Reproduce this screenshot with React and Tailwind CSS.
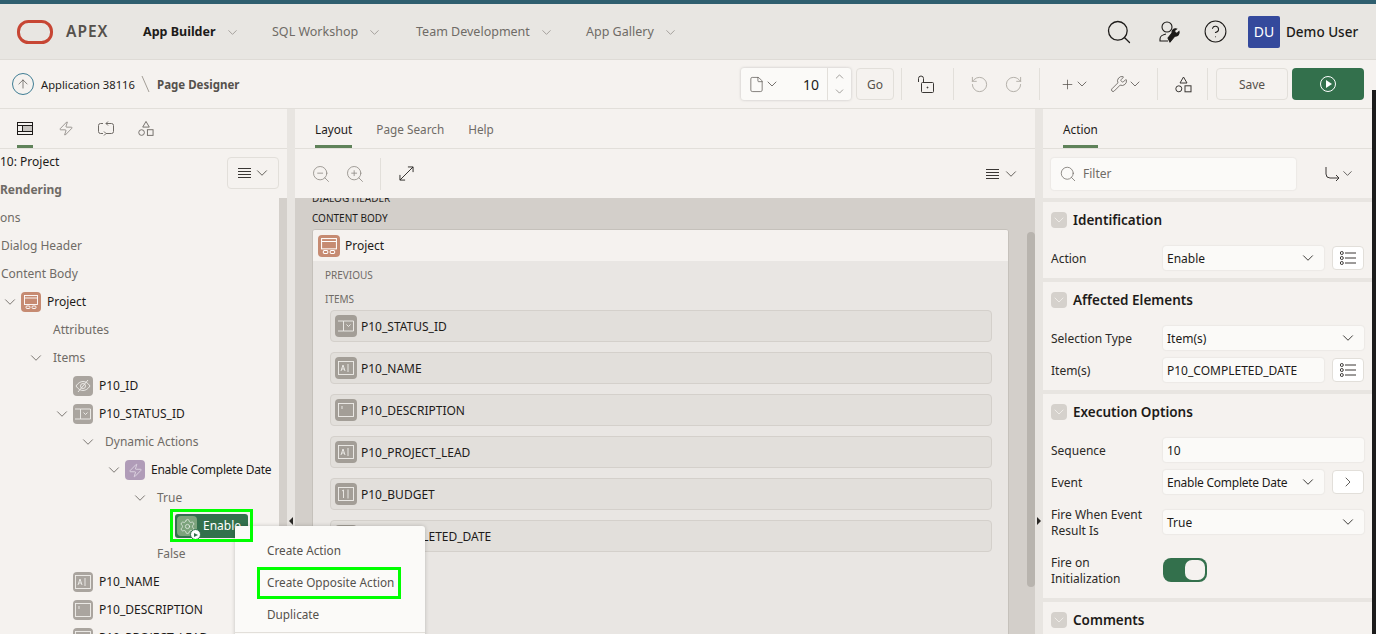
import React from 'react';
import {
    Search, ChevronDown, ChevronUp, ChevronRight, CircleHelp, RotateCcw, RotateCw, Plus, Wrench,
    File, ZoomIn, ZoomOut, Zap, Settings, ArrowUp,
} from 'lucide-react';

const font = { fontFamily: '"Noto Sans", "Open Sans", sans-serif' };

// keeps a 13px layout box whatever the drawn size is
const Chev = ({ className = 'text-[#55514c]', size = 18 }) => (
    <ChevronDown
        size={size}
        strokeWidth={1.2}
        className={`shrink-0 ${className}`}
        style={{ margin: (13 - size) / 2 }}
    />
);

const ShapesIcon = ({ className = '' }) => (
    <svg width="17" height="17" viewBox="0 0 17 17" fill="none" stroke="currentColor" className={className}>
        <path d="M8.5 1 L12 7 L5 7 Z" />
        <circle cx="3.8" cy="12.8" r="3" />
        <rect x="10" y="9.8" width="6" height="6" />
    </svg>
);

const LinesIcon = () => (
    <svg width="13" height="12" viewBox="0 0 13 12" stroke="#3a3734" className="block">
        <path d="M0 1.5h13M0 4.5h13M0 7.5h13M0 10.5h13" />
    </svg>
);

const MenuButton = () => (
    <div className="flex items-center gap-[5px]">
        <LinesIcon />
        <Chev />
    </div>
);

const LayoutIcon = () => (
    <svg width="16" height="13" viewBox="0 0 16 13" fill="none" stroke="#1d1b19" className="block">
        <rect x="5.5" y="3.5" width="10" height="6" fill="#c8c5c1" stroke="none" />
        <rect x="0.5" y="0.5" width="15" height="12" />
        <path d="M0.5 3.5h15M0.5 9.5h15M5.5 3.5v6" />
    </svg>
);

const LoopIcon = () => (
    <svg width="16" height="15" viewBox="0 0 16 15" fill="none" stroke="#6f6b66" className="block">
        <path d="M5 2.5H2.5a2 2 0 0 0-2 2v6a2 2 0 0 0 2 2H5M8 12.5h5.5a2 2 0 0 0 2-2v-6a2 2 0 0 0-2-2H8" />
        <path d="M10 0.5L8 2.5l2 2M6 10.5l2 2-2 2" />
    </svg>
);

const RegionIcon = ({ size = 20 }) => (
    <span className="flex shrink-0 items-center justify-center rounded-sm bg-[#c68b72]" style={{ width: size, height: size }}>
        <svg width={size - 6} height={size - 6} viewBox="0 0 14 14" fill="none" stroke="#fff" strokeWidth="0.9">
            <rect x="0.5" y="0.5" width="13" height="9" />
            <path d="M0.5 3h13" />
            <rect x="2" y="11" width="4" height="2.5" rx="1" />
            <rect x="8" y="11" width="4" height="2.5" rx="1" />
        </svg>
    </span>
);

// glyph inside the grey page item squares
const ItemGlyph = ({ kind }) => {
    if (kind === 'hidden') {
        return (
            <svg width="16" height="14" viewBox="0 0 16 14" fill="none" stroke="#f1efec" strokeWidth="0.9">
                <path d="M1 7c2-3 4.500-4.500 7-4.500S13 4 15 7c-2 3-4.500 4.500-7 4.500S3 10 1 7z" />
                <circle cx="8" cy="7" r="2.500" />
                <path d="M3 13L13 1" />
            </svg>
        );
    }
    if (kind === 'select') {
        return (
            <svg width="16" height="12" viewBox="0 0 16 12" fill="none" stroke="#f1efec" strokeWidth="0.9">
                <path d="M0 1h5.500v10H0M5.500 1H15.500v10H5.500" />
                <path d="M8.500 4.500l2 2 2-2" />
            </svg>
        );
    }
    return (
        <svg width="16" height="14" viewBox="0 0 16 14" fill="none" stroke="#f1efec" strokeWidth="0.9">
            <rect x="0.5" y="0.5" width="15" height="13" />
            {kind === 'text' && <path d="M3 10l2-6 2 6M3.800 8h2.400M10 3v8" />}
            {kind === 'area' && <path d="M4 3v3" />}
            {kind === 'number' && <path d="M4 4l1.500-1v8M10 2.500v9" />}
        </svg>
    );
};

const ItemIcon = ({ kind, size = 20, bg = 'bg-[#aaa59f]' }) => (
    <span className={`flex shrink-0 items-center justify-center rounded-sm ${bg}`} style={{ width: size, height: size }}>
        <ItemGlyph kind={kind} />
    </span>
);

const treeRows = [
    { pl: 'pl-0', text: '10: Project', tone: 'text-[#1d1b19]' },
    { pl: 'pl-0', text: 'Rendering', tone: 'text-[#6f6b66] font-bold' },
    { pl: 'pl-0', text: 'ons' },
    { pl: 'pl-[1px]', text: 'Dialog Header' },
    { pl: 'pl-[1px]', text: 'Content Body' },
    { pl: 'pl-[3px]', slot: 'w-[18px]', chevron: true, icon: <RegionIcon />, text: 'Project', tone: 'text-[#1d1b19]' },
    { pl: 'pl-[53px]', text: 'Attributes' },
    { pl: 'pl-[29px]', slot: 'w-[24px]', chevron: true, text: 'Items' },
    { pl: 'pl-[73px]', icon: <ItemIcon kind="hidden" />, text: 'P10_ID', tone: 'text-[#1d1b19]' },
    { pl: 'pl-[55px]', slot: 'w-[18px]', chevron: true, icon: <ItemIcon kind="select" />, text: 'P10_STATUS_ID', tone: 'text-[#1d1b19]' },
    { pl: 'pl-[81px]', slot: 'w-[24px]', chevron: true, text: 'Dynamic Actions' },
    {
        pl: 'pl-[107px]',
        slot: 'w-[18px]',
        chevron: true,
        icon: (
            <span className="flex h-5 w-5 shrink-0 items-center justify-center rounded-sm bg-[#b09cb8]">
                <Zap size={15} strokeWidth={1} className="text-[#f4f0f5]" />
            </span>
        ),
        text: 'Enable Complete Date',
        tone: 'text-[#1d1b19] tracking-[-0.25px]',
    },
    { pl: 'pl-[133px]', slot: 'w-[24px]', chevron: true, text: 'True' },
    { pl: 'pl-[175px]', selected: true },
    { pl: 'pl-[157px]', text: 'False' },
    { pl: 'pl-[73px]', icon: <ItemIcon kind="text" />, text: 'P10_NAME', tone: 'text-[#1d1b19]' },
    { pl: 'pl-[73px]', icon: <ItemIcon kind="area" />, text: 'P10_DESCRIPTION', tone: 'text-[#1d1b19]' },
    { pl: 'pl-[73px]', icon: <ItemIcon kind="text" />, text: 'P10_PROJECT_LEAD', tone: 'text-[#1d1b19]' },
];

const TreeRow = ({ row }) => {
    if (row.selected) {
        return (
            <div className={`flex h-7 items-center ${row.pl}`}>
                <div className="relative flex h-6 w-[73px] items-center gap-[6px] rounded-[3px] bg-[#33704c] pl-[2px] text-white">
                    <span className="flex h-5 w-5 items-center justify-center rounded-sm bg-[#7ca37c]">
                        <Settings size={17} strokeWidth={1} className="text-[#eef3ee]" />
                    </span>
                    <span>Enable</span>
                    <span className="absolute left-[15px] top-[15px] flex h-[11px] w-[11px] items-center justify-center rounded-full border border-[#33704c] bg-white">
                        <span className="ml-px h-0 w-0 border-y-[2.5px] border-l-[4px] border-y-transparent border-l-[#33704c]" />
                    </span>
                </div>
            </div>
        );
    }
    return (
        <div className={`flex h-7 items-center whitespace-nowrap ${row.pl} ${row.tone || 'text-[#6f6b66]'}`}>
            {row.chevron && (
                <span className={`flex shrink-0 ${row.slot}`}>
                    <Chev className="text-[#6f6b66]" />
                </span>
            )}
            {row.icon && <span className="mr-[6px] flex">{row.icon}</span>}
            <span>{row.text}</span>
        </div>
    );
};

const Tab = ({ label, active }) => (
    <div className={`flex h-full items-center border-b-[3px] pt-[5px] ${active ? 'border-[#5f8259] text-[#1d1b19]' : 'border-transparent text-[#6f6b66]'}`}>
        {label}
    </div>
);

const IconTab = ({ children, active, className = '' }) => (
    <div className={`flex h-full w-4 items-center justify-center border-b-[3px] pt-[3px] ${active ? 'border-[#5f8259]' : 'border-transparent'} ${className}`}>
        {children}
    </div>
);

const LeftPanel = () => (
    <div className="relative flex w-[287px] shrink-0 flex-col overflow-hidden">
        <div className="flex h-10 shrink-0 border-b border-[#e2dfda] pl-[17px]">
            <IconTab active><LayoutIcon /></IconTab>
            <IconTab className="ml-[25px]"><Zap size={17} strokeWidth={1} className="text-[#6f6b66]" /></IconTab>
            <IconTab className="ml-[24px]"><LoopIcon /></IconTab>
            <IconTab className="ml-[24px]"><ShapesIcon className="text-[#6f6b66]" /></IconTab>
        </div>
        <div className="flex min-h-0 flex-1">
            <div className="-mt-[1px] min-w-0 flex-1 text-[12px]">
                {treeRows.map((row, i) => (
                    <TreeRow key={i} row={row} />
                ))}
            </div>
            <div className="mt-[49px] w-2 shrink-0 bg-[#d4d0cb]" />
        </div>
        <div className="absolute left-[227px] top-[48px] flex h-8 w-[52px] items-center justify-center rounded-sm border border-[#e2dfda] bg-[#f5f2ef]">
            <MenuButton />
        </div>
    </div>
);

const Splitter = ({ dir, className = '' }) => (
    <div className={`flex w-2 shrink-0 bg-[#e8e5e1] pt-[408px] ${className}`}>
        <span className={`h-0 w-0 border-y-[4px] border-y-transparent ${dir === 'left' ? 'ml-[2px] border-r-[4px] border-r-[#2b2926]' : 'ml-[2px] border-l-[4px] border-l-[#2b2926]'}`} />
    </div>
);

const canvasItems = [
    { kind: 'select', name: 'P10_STATUS_ID' },
    { kind: 'text', name: 'P10_NAME' },
    { kind: 'area', name: 'P10_DESCRIPTION' },
    { kind: 'text', name: 'P10_PROJECT_LEAD' },
    { kind: 'number', name: 'P10_BUDGET' },
    { kind: 'text', name: 'P10_COMPLETED_DATE' },
];

const CenterPanel = () => (
    <div className="flex min-w-0 flex-1 flex-col">
        <div className="flex h-10 shrink-0 gap-6 border-b border-[#e2dfda] pl-5 text-[11.750px]">
            <Tab label="Layout" active />
            <Tab label="Page Search" />
            <Tab label="Help" />
        </div>
        <div className="flex h-[49px] shrink-0 items-center pl-[16px] pr-[18px]">
            <ZoomOut size={20} strokeWidth={1} className="text-[#8f8b85]" />
            <ZoomIn size={20} strokeWidth={1} className="ml-[14px] text-[#8f8b85]" />
            <div className="ml-[15px] h-8 w-px bg-[#e2dfda]" />
            <svg width="15" height="15" viewBox="0 0 16 16" fill="none" stroke="#2b2926" className="ml-[18px]">
                <path d="M1 15L15 1M9.500 1H15v5.500M1 9.500V15h5.500" />
            </svg>
            <div className="ml-auto"><MenuButton /></div>
        </div>
        <div className="flex min-h-0 flex-1 overflow-hidden bg-[#d3cfca]">
            <div className="min-w-0 flex-1 pl-[17px] pr-[18px] text-[10px] uppercase">
                <div className="-mt-[7px] h-[14px] leading-[14px] text-[#2b2926]">Dialog Header</div>
                <div className="mt-[6px] h-[14px] leading-[14px] text-[#1d1b19]">Content Body</div>
                <div className="mt-[4px] h-[460px] overflow-hidden rounded-t-[3px] border border-[#c5c1bb] bg-[#e9e6e3]">
                    <div className="flex h-[31px] items-center gap-[5px] bg-[#f5f2ef] pl-[5px] text-[12px] normal-case text-[#1d1b19]">
                        <RegionIcon size={22} />
                        Project
                    </div>
                    <div className="pl-[12px] pr-[16px] text-[#6f6b66]">
                        <div className="mt-[7px] h-[14px] leading-[14px]">Previous</div>
                        <div className="mt-[10px] h-[14px] leading-[14px]">Items</div>
                        <div className="ml-[5px] mt-[4px] flex flex-col gap-[10px]">
                            {canvasItems.map(item => (
                                <div key={item.name} className="flex h-8 items-center gap-[4px] rounded-sm border border-[#d4d0cb] bg-[#e2dfdb] pl-[4px] text-[12px] normal-case text-[#1d1b19]">
                                    <ItemIcon kind={item.kind} size={22} bg="bg-[#a39e97]" />
                                    <span className="pt-px">{item.name}</span>
                                </div>
                            ))}
                        </div>
                    </div>
                </div>
            </div>
            <div className="mt-[34px] h-[355px] w-2 shrink-0 rounded-full bg-[#b8b4ae]" />
        </div>
    </div>
);

const Field = ({ value, select, narrow, tight }) => (
    <div className={`flex h-6 items-center justify-between rounded-[3px] bg-[#fbfaf8] pl-1 pr-[10px] text-[#1d1b19] shadow-[0_0_2px_rgba(0,0,0,0.12)] ${narrow ? 'w-[161px]' : 'w-[201px]'}`}>
        <span className={`whitespace-nowrap pt-px ${tight ? 'tracking-[-0.25px]' : ''}`}>{value}</span>
        {select && <Chev className="text-[#2b2926]" />}
    </div>
);

const SideButton = ({ children }) => (
    <div className="ml-2 flex h-6 w-8 items-center justify-center rounded-sm border border-[#e2dfda] bg-white">
        {children}
    </div>
);

const ListIcon = () => (
    <svg width="16" height="14" viewBox="0 0 16 14" fill="none" stroke="#3a3734">
        <circle cx="1.800" cy="2" r="1.500" />
        <circle cx="1.800" cy="7" r="1.500" />
        <circle cx="1.800" cy="12" r="1.500" />
        <path d="M5 2h11M5 7h11M5 12h11" />
    </svg>
);

const Section = ({ title, children }) => (
    <div className="border-t-4 border-[#e8e5e1] px-2 pb-2 pt-[10px]">
        <div className="flex h-4 items-center gap-[6px]">
            <span className="flex h-4 w-4 items-center justify-center rounded-sm bg-[#d5d1cc]">
                <Chev className="text-[#f5f2ef]" size={16} />
            </span>
            <span className="pt-px text-[13.500px] font-semibold text-[#1d1b19]">{title}</span>
        </div>
        <div className="mt-[18px] flex flex-col gap-2">{children}</div>
    </div>
);

const Prop = ({ label, tall, children }) => (
    <div className={`flex items-center ${tall ? 'h-10' : 'h-6'}`}>
        <div className="w-28 shrink-0 pt-px leading-4 text-[#2b2926]">{label}</div>
        {children}
    </div>
);

const RightPanel = () => (
    <div className="flex w-[329px] shrink-0 flex-col overflow-hidden text-[12px]">
        <div className="flex h-10 shrink-0 border-b border-[#e2dfda] pl-5 text-[11.750px]">
            <Tab label="Action" active />
        </div>
        <div className="flex h-[49px] shrink-0 items-center pl-2">
            <div className="flex h-8 w-[245px] items-center gap-[6px] rounded-[3px] bg-[#fbfaf8] pl-[8px] text-[#6f6b66] shadow-[0_0_2px_rgba(0,0,0,0.12)]">
                <Search size={18} strokeWidth={1} className="text-[#6f6b66]" />
                Filter
            </div>
            <svg width="16" height="16" viewBox="0 0 16 16" fill="none" stroke="#3a3734" className="ml-[29px]">
                <path d="M1 1v7a4 4 0 0 0 4 4h9M11 9l3 3-3 3" />
            </svg>
            <Chev className="ml-px text-[#3a3734]" size={15} />
        </div>
        <Section title="Identification">
            <Prop label="Action">
                <Field value="Enable" select narrow />
                <SideButton><ListIcon /></SideButton>
            </Prop>
        </Section>
        <Section title="Affected Elements">
            <Prop label="Selection Type"><Field value="Item(s)" select /></Prop>
            <Prop label="Item(s)">
                <Field value="P10_COMPLETED_DATE" narrow />
                <SideButton><ListIcon /></SideButton>
            </Prop>
        </Section>
        <Section title="Execution Options">
            <Prop label="Sequence"><Field value="10" /></Prop>
            <Prop label="Event">
                <Field value="Enable Complete Date" select narrow tight />
                <SideButton><ChevronRight size={16} strokeWidth={1.2} className="text-[#3a3734]" /></SideButton>
            </Prop>
            <Prop label={<>Fire When Event<br />Result Is</>} tall><Field value="True" select /></Prop>
            <Prop label={<>Fire on<br />Initialization</>} tall>
                <div className="flex h-6 w-11 items-center justify-end rounded-[8px] bg-[#33704c] pr-[2px]">
                    <span className="h-5 w-5 rounded-[7px] bg-[#f5f2ef]" />
                </div>
            </Prop>
        </Section>
        <Section title="Comments" />
    </div>
);

const Sep = ({ className = '' }) => <div className={`h-8 w-px shrink-0 bg-[#e2dfda] ${className}`} />;

const navItems = [
    { label: 'App Builder', active: true, width: 'w-[129px]' },
    { label: 'SQL Workshop', width: 'w-[144px]' },
    { label: 'Team Development', width: 'w-[170px]' },
    { label: 'App Gallery', width: 'w-auto' },
];

const TopBar = () => (
    <header className="flex h-[56px] shrink-0 items-center border-b border-[#dedbd6] bg-[#e8e6e2] pl-[17px] pr-[18px] text-[12.500px]">
        <svg width="36" height="24" viewBox="0 0 36 24" fill="none" className="shrink-0">
            <rect x="1.500" y="1.500" width="33" height="21" rx="10" stroke="#c74634" strokeWidth="3" />
        </svg>
        <span className="ml-[13px] w-[77px] pt-px text-[15.500px] font-semibold tracking-[1px] text-[#55514c]">APEX</span>
        {navItems.map(item => (
            <div key={item.label} className={`flex shrink-0 items-center gap-[10px] pt-[2px] ${item.width} ${item.active ? 'font-bold text-[#1d1b19]' : 'text-[#6f6b66]'}`}>
                {item.label}
                <Chev className="text-[#8f8b85]" size={15} />
            </div>
        ))}
        <Search size={28} strokeWidth={1.100} className="ml-auto text-[#1d1b19]" />
        <svg width="24" height="24" viewBox="0 0 24 24" fill="none" stroke="#1d1b19" strokeWidth="1.100" className="ml-[24px]">
            <circle cx="10" cy="7" r="5" />
            <path d="M9 14c-3 .5-6 2.500-6 5v2h8" />
            <path d="M13 22l5-6a3.500 3.500 0 0 0 4-4.500l-2 2-2-1-.500-2 2-1.500a3.500 3.500 0 0 0-4.500 4l-4 5z" fill="#1d1b19" />
        </svg>
        <CircleHelp size={25} strokeWidth={1} className="ml-[22px] text-[#1d1b19]" />
        <span className="ml-[20px] flex h-8 w-8 items-center justify-center rounded-[2px] bg-[#34499c] text-[14px] text-white">DU</span>
        <span className="ml-[6px] w-[72px] whitespace-nowrap pt-px text-[13.500px] font-medium text-[#1d1b19]">Demo User</span>
    </header>
);

const Toolbar = () => (
    <div className="flex h-[49px] shrink-0 items-center border-b border-[#e2dfda] bg-[#f5f2ef] pl-3 pr-3 text-[12px]">
        <span className="flex h-[22px] w-[22px] items-center justify-center rounded-full border border-[#3f7d94]">
            <ArrowUp size={14} strokeWidth={1.200} className="text-[#55514c]" />
        </span>
        <span className="ml-[7px] w-[93px] whitespace-nowrap pt-[2px] text-[11.200px] text-[#1d1b19]">Application 38116</span>
        <svg width="12" height="18" viewBox="0 0 12 18" stroke="#a39e97" className="ml-[6px] shrink-0">
            <path d="M2 1l7 16" />
        </svg>
        <span className="ml-[5px] whitespace-nowrap pt-[2px] text-[11.500px] font-bold text-[#55514c]">Page Designer</span>

        <div className="ml-auto flex h-8 w-[110px] shrink-0 items-center rounded-[3px] bg-[#fbfaf8] shadow-[0_0_3px_rgba(0,0,0,0.2)]">
            <File size={17} strokeWidth={1} className="ml-[7px] text-[#55514c]" />
            <Chev className="ml-[1px] text-[#55514c]" size={16} />
            <span className="ml-auto mr-2 pt-px text-[14px] text-[#1d1b19]">10</span>
            <div className="flex h-full w-6 shrink-0 flex-col items-center justify-center gap-[2px] border-l border-[#e2dfda]">
                <ChevronUp size={13} strokeWidth={1} className="text-[#55514c]" />
                <ChevronDown size={13} strokeWidth={1} className="text-[#55514c]" />
            </div>
        </div>
        <div className="ml-[5px] flex h-8 w-[38px] shrink-0 items-center justify-center rounded-sm border border-[#e2dfda] pt-px text-[#55514c]">Go</div>
        <Sep className="ml-[7px]" />
        <svg width="18" height="18" viewBox="0 0 18 18" fill="none" stroke="#3a3734" className="ml-[15px] shrink-0">
            <rect x="4.500" y="7.500" width="12" height="10" rx="1" />
            <path d="M1.500 7V3.500a2.500 2.500 0 0 1 5 0V7" />
            <circle cx="10.500" cy="12.500" r="0.500" fill="#3a3734" />
        </svg>
        <Sep className="ml-[18px]" />
        <RotateCcw size={19} strokeWidth={1} className="ml-[16px] shrink-0 text-[#a39e97]" />
        <RotateCw size={19} strokeWidth={1} className="ml-[15px] shrink-0 text-[#a39e97]" />
        <Sep className="ml-[16px]" />
        <Plus size={15} strokeWidth={1.200} className="ml-[20px] shrink-0 text-[#55514c]" />
        <Chev className="ml-[4px] text-[#55514c]" size={16} />
        <Wrench size={18} strokeWidth={1} className="ml-[22px] shrink-0 text-[#55514c]" />
        <Chev className="ml-[3px] text-[#55514c]" size={16} />
        <Sep className="ml-[16px]" />
        <ShapesIcon className="ml-[17px] shrink-0 text-[#3a3734]" />
        <Sep className="ml-[15px]" />
        <div className="ml-[8px] flex h-8 w-[72px] shrink-0 items-center justify-center rounded-sm border border-[#e2dfda] pt-px text-[#55514c]">Save</div>
        <div className="ml-[4px] flex h-8 w-[72px] shrink-0 items-center justify-center rounded-sm bg-[#33704c]">
            <span className="flex h-4 w-4 items-center justify-center rounded-full border border-white">
                <span className="ml-px h-0 w-0 border-y-[4px] border-l-[6px] border-y-transparent border-l-white" />
            </span>
        </div>
    </div>
);

export default function App() {
    return (
        <div className="relative flex h-[634px] w-[1376px] flex-col overflow-hidden bg-[#f5f2ef]" style={font}>
            <div className="h-[4px] shrink-0 bg-[#2f5f6f]" />
            <TopBar />
            <Toolbar />
            <main className="flex min-h-0 flex-1 pr-1">
                <LeftPanel />
                <Splitter dir="left" />
                <CenterPanel />
                <Splitter dir="right" />
                <RightPanel />
            </main>

            {/* dark window edge on the right */}
            <div className="absolute bottom-0 right-0 top-[90px] w-1 bg-[#1c1c1c]" />

            {/* context menu */}
            <div className="absolute left-[235px] top-[526px] h-[120px] w-[190px] rounded-[3px] bg-[#fbfaf8] pl-[32px] pt-[9px] text-[11.750px] text-[#55514c] shadow-[0_0_4px_rgba(0,0,0,0.2)]">
                <div className="flex h-8 items-center">Create Action</div>
                <div className="flex h-8 items-center">Create Opposite Action</div>
                <div className="flex h-8 items-center">Duplicate</div>
                <div className="-ml-[32px] mt-[1px] h-px bg-[#e2dfda]" />
            </div>

            {/* green annotation boxes */}
            <div className="absolute left-[170px] top-[509px] h-[33px] w-[83px] border-[3px] border-[#00ff00]" />
            <div className="absolute left-[257px] top-[567px] h-[32px] w-[144px] border-[3px] border-[#00ff00]" />
        </div>
    );
}
